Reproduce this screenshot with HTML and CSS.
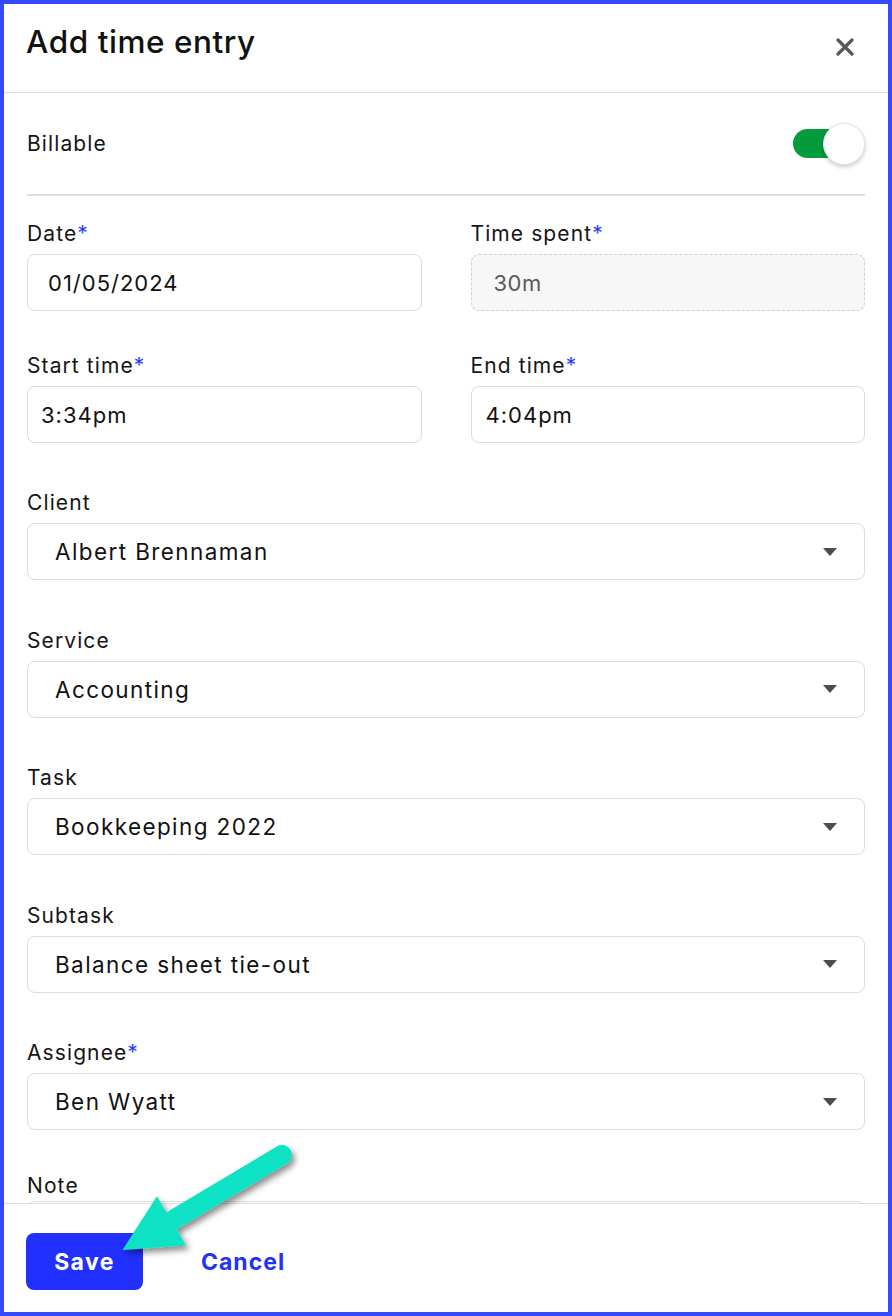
FILE: index.html
```html
<!DOCTYPE html>
<html lang="en">
<head>
<meta charset="utf-8">
<title>Add time entry</title>
<link rel="stylesheet" href="styles.css">
</head>
<body>
<div class="frame">
  <header class="head">
    <h1 class="title">Add time entry</h1>
    <button class="close" aria-label="Close">
      <svg width="18" height="18" viewBox="0 0 18 18"><path d="M2 2 L16 16 M16 2 L2 16" stroke="#55595e" stroke-width="3.2" stroke-linecap="round"/></svg>
    </button>
  </header>

  <main class="body">
    <div class="billable">
      <span class="billable-label">Billable</span>
      <span class="toggle"><span class="track"></span><span class="knob"></span></span>
    </div>
    <div class="divider"></div>

    <div class="pair first">
      <div class="field">
        <label class="label">Date<span class="req">*</span></label>
        <div class="box pad-date">01/05/2024</div>
      </div>
      <div class="field">
        <label class="label">Time spent<span class="req">*</span></label>
        <div class="box readonly">30m</div>
      </div>
    </div>

    <div class="pair second">
      <div class="field">
        <label class="label">Start time<span class="req">*</span></label>
        <div class="box pad-start">3:34pm</div>
      </div>
      <div class="field">
        <label class="label">End time<span class="req">*</span></label>
        <div class="box pad-end">4:04pm</div>
      </div>
    </div>

    <div class="field select-field client">
      <label class="label">Client</label>
      <div class="box select"><span>Albert Brennaman</span><span class="caret"></span></div>
    </div>
    <div class="field select-field">
      <label class="label">Service</label>
      <div class="box select"><span>Accounting</span><span class="caret"></span></div>
    </div>
    <div class="field select-field">
      <label class="label">Task</label>
      <div class="box select"><span>Bookkeeping 2022</span><span class="caret"></span></div>
    </div>
    <div class="field select-field">
      <label class="label">Subtask</label>
      <div class="box select"><span>Balance sheet tie-out</span><span class="caret"></span></div>
    </div>
    <div class="field select-field">
      <label class="label">Assignee<span class="req">*</span></label>
      <div class="box select"><span>Ben Wyatt</span><span class="caret"></span></div>
    </div>
    <div class="field note">
      <label class="label">Note</label>
      <div class="textarea"></div>
    </div>
  </main>

  <footer class="foot">
    <button class="save">Save</button>
    <button class="cancel">Cancel</button>
  </footer>

  <svg class="arrow" width="220" height="150" viewBox="0 0 220 150" aria-hidden="true">
    <defs>
      <filter id="sh" x="-20%" y="-20%" width="150%" height="150%">
        <feDropShadow dx="3" dy="4" stdDeviation="3" flood-color="#000" flood-opacity="0.45"/>
      </filter>
    </defs>
    <g filter="url(#sh)" transform="translate(-100 -1130)">
      <line x1="282" y1="1155" x2="168" y2="1223" stroke="#0fe3c4" stroke-width="20" stroke-linecap="round"/>
      <polygon points="122.5,1250 156.9,1196.2 186.2,1245.6" fill="#0fe3c4"/>
    </g>
  </svg>
</div>
</body>
</html>
```

FILE: styles.css
```css
* { box-sizing: border-box; }

html, body {
  margin: 0;
  padding: 0;
  background: #fff;
}

body {
  font-family: Inter, "Noto Sans", sans-serif;
  color: #151515;
}

.frame {
  position: relative;
  width: 892px;
  height: 1316px;
  border: 4px solid #3349ff;
  display: flex;
  flex-direction: column;
  overflow: hidden;
  background: #fff;
}

.head {
  height: 89px;
  flex: none;
  display: flex;
  align-items: flex-start;
  justify-content: space-between;
  padding: 19px 0 0 22px;
  border-bottom: 1px solid #dedede;
}

.title {
  margin: 0;
  font-size: 31.5px;
  line-height: 38px;
  font-weight: 500;
  color: #111;
  letter-spacing: 0.55px;
}

.close {
  border: 0;
  background: none;
  padding: 0;
  margin: 15px 34px 0 0;
  width: 18px;
  height: 18px;
  display: flex;
}

.body {
  flex: 1;
  overflow: hidden;
  padding: 0 23px;
}

.billable {
  height: 101px;
  display: flex;
  align-items: center;
  justify-content: space-between;
}

.billable-label {
  font-size: 21px;
  line-height: 24px;
  letter-spacing: 1.1px;
  color: #151515;
}

.toggle {
  position: relative;
  width: 72px;
  height: 41px;
  display: block;
}

.track {
  position: absolute;
  left: 0;
  top: 6px;
  width: 58px;
  height: 29px;
  border-radius: 15px;
  background: #039b3b;
}

.knob {
  position: absolute;
  right: 0;
  top: 0;
  width: 42px;
  height: 42px;
  border-radius: 50%;
  background: #fff;
  border: 1px solid #e4e4e4;
  box-shadow: 0 2px 4px rgba(0, 0, 0, 0.22);
}

.divider {
  height: 2px;
  background: #dcdcdc;
}

.pair {
  display: grid;
  grid-template-columns: 1fr 1fr;
  column-gap: 49px;
}

.pair.first { margin-top: 26px; }
.pair.second { margin-top: 43px; }

.field {
  display: flex;
  flex-direction: column;
}

.label {
  font-size: 21px;
  line-height: 24px;
  letter-spacing: 1.1px;
  color: #151515;
  margin-bottom: 8px;
}

.req {
  color: #2a3cff;
}

.box {
  height: 57px;
  border: 1px solid #dcdcdc;
  border-radius: 8px;
  display: flex;
  align-items: center;
  font-size: 22px;
  letter-spacing: 1px;
  color: #111;
  padding-left: 16px;
}

.pad-date { padding-left: 20px; }
.pad-start { padding-left: 13px; }
.pad-end { padding-left: 14px; }

.readonly {
  background: #f7f7f7;
  border: 1px dashed #cfcfcf;
  color: #5a5a5a;
  padding-left: 22px;
  letter-spacing: 0.5px;
}

.select-field { margin-top: 48.5px; }
.select-field.client { margin-top: 48px; }

.select {
  justify-content: space-between;
  padding: 0 27px 0 27px;
  font-size: 22.5px;
  letter-spacing: 1.4px;
}

.caret {
  width: 0;
  height: 0;
  border-left: 7px solid transparent;
  border-right: 7px solid transparent;
  border-top: 8px solid #4d4d4d;
}

.note { margin-top: 44px; }
.note .label { margin-bottom: 3px; }

.textarea {
  height: 80px;
  border: 1px solid #dcdcdc;
  border-radius: 8px;
}

.foot {
  flex: none;
  height: 109px;
  border-top: 1px solid #dedede;
  display: flex;
  align-items: flex-start;
  padding: 29px 0 0 22px;
}

.save {
  width: 117px;
  height: 57px;
  border: 0;
  border-radius: 8px;
  background: #2130ff;
  color: #fff;
  font-family: Inter, "Noto Sans", sans-serif;
  font-size: 23px;
  font-weight: 700;
  letter-spacing: 1.4px;
  padding: 0;
}

.cancel {
  border: 0;
  background: none;
  padding: 0;
  margin-left: 58px;
  height: 57px;
  color: #2233f5;
  font-family: Inter, "Noto Sans", sans-serif;
  font-size: 23px;
  font-weight: 700;
  letter-spacing: 1px;
}

.arrow {
  position: absolute;
  left: 96px;
  top: 1126px;
  pointer-events: none;
}
```
